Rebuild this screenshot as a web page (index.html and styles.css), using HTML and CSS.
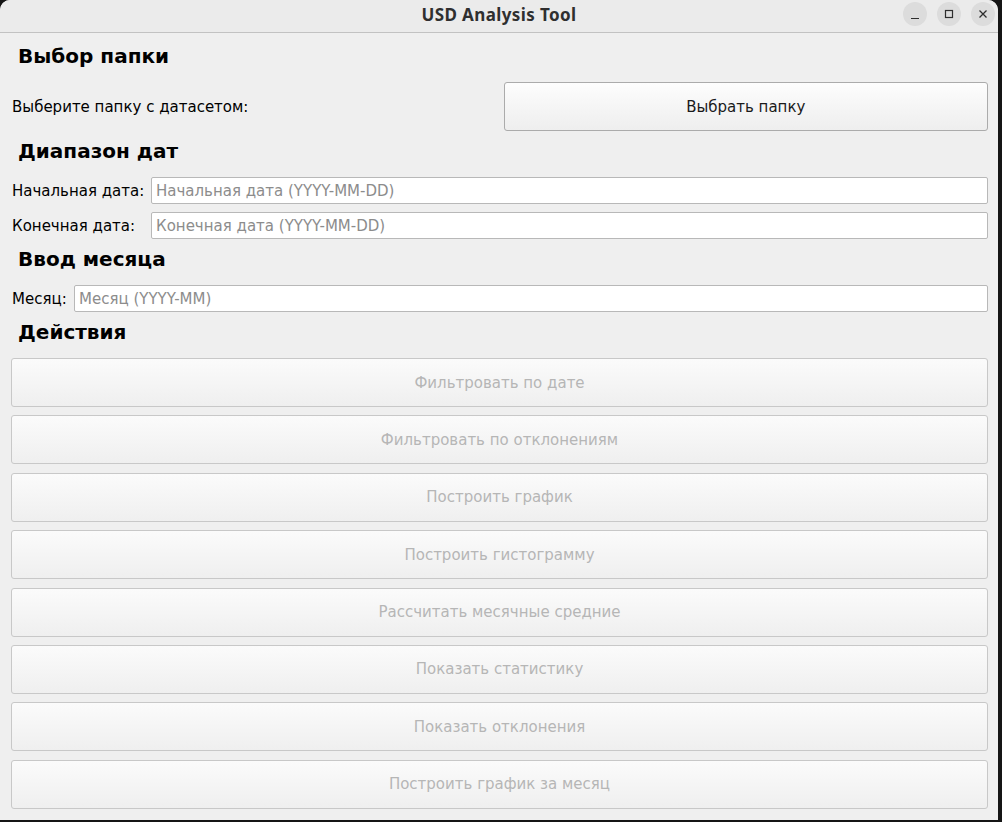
FILE: index.html
```html
<!DOCTYPE html>
<html lang="ru">
<head>
<meta charset="utf-8">
<title>USD Analysis Tool</title>
<link rel="stylesheet" href="styles.css">
</head>
<body>
<div class="window">
  <header class="titlebar">
    <div class="title">USD Analysis Tool</div>
    <div class="controls">
      <span class="ctl"><svg width="24" height="24" viewBox="0 0 24 24"><path d="M8 16.5h8" stroke="#2e2e2e" stroke-width="1.2" fill="none"/></svg></span>
      <span class="ctl"><svg width="24" height="24" viewBox="0 0 24 24"><rect x="8.5" y="8.5" width="7" height="7" stroke="#2e2e2e" stroke-width="1.2" fill="none"/></svg></span>
      <span class="ctl"><svg width="24" height="24" viewBox="0 0 24 24"><path d="M8.5 8.5l7 7M15.5 8.5l-7 7" stroke="#2e2e2e" stroke-width="1.3" fill="none"/></svg></span>
    </div>
  </header>
  <main class="content">
    <h2 class="heading">Выбор папки</h2>
    <div class="split-row">
      <span class="label">Выберите папку с датасетом:</span>
      <button class="btn">Выбрать папку</button>
    </div>

    <h2 class="heading">Диапазон дат</h2>
    <div class="form date-form">
      <label class="label">Начальная дата:</label>
      <input class="field" type="text" placeholder="Начальная дата (YYYY-MM-DD)">
      <label class="label">Конечная дата:</label>
      <input class="field" type="text" placeholder="Конечная дата (YYYY-MM-DD)">
    </div>

    <h2 class="heading">Ввод месяца</h2>
    <div class="form month-form">
      <label class="label">Месяц:</label>
      <input class="field" type="text" placeholder="Месяц (YYYY-MM)">
    </div>

    <h2 class="heading">Действия</h2>
    <div class="actions">
      <button class="btn" disabled>Фильтровать по дате</button>
      <button class="btn" disabled>Фильтровать по отклонениям</button>
      <button class="btn" disabled>Построить график</button>
      <button class="btn" disabled>Построить гистограмму</button>
      <button class="btn" disabled>Рассчитать месячные средние</button>
      <button class="btn" disabled>Показать статистику</button>
      <button class="btn" disabled>Показать отклонения</button>
      <button class="btn" disabled>Построить график за месяц</button>
    </div>
  </main>
</div>
</body>
</html>
```

FILE: styles.css
```css
* { box-sizing: border-box; }

html, body {
  margin: 0;
  padding: 0;
  width: 1002px;
  height: 822px;
  background: #151515;
  overflow: hidden;
}

.window {
  width: 998px;
  height: 820px;
  background: #efefef;
  border-radius: 10px 10px 0 0;
  overflow: hidden;
  display: flex;
  flex-direction: column;
  font-family: "DejaVu Sans", sans-serif;
  color: #000;
}

.titlebar {
  height: 33px;
  flex: none;
  background: #ebebeb;
  border-bottom: 1px solid #c2c2c2;
  display: flex;
  align-items: center;
  justify-content: center;
  position: relative;
}

.title {
  font-family: "Noto Sans", "Open Sans", sans-serif;
  font-weight: 700;
  font-size: 17px;
  letter-spacing: 0.4px;
  color: #2f2f2f;
  margin-top: -4px;
}

.controls {
  position: absolute;
  right: 3px;
  top: 2px;
  display: flex;
  gap: 10px;
}

.ctl {
  width: 24px;
  height: 24px;
  border-radius: 50%;
  background: #dcdcdc;
  display: flex;
  align-items: center;
  justify-content: center;
}

.ctl svg { display: block; }

.content {
  padding: 11px 10px 0 11px;
  display: flex;
  flex-direction: column;
  gap: 8px;
}

.heading {
  margin: 0;
  height: 30px;
  padding: 0 0 6px 7px;
  line-height: 24px;
  font-size: 20px;
  font-weight: 700;
}

.label {
  font-size: 15px;
  padding-left: 1px;
  white-space: nowrap;
}

.split-row {
  display: grid;
  grid-template-columns: 1fr 1fr;
  gap: 8px;
  align-items: center;
}

.btn {
  height: 49px;
  font-family: "DejaVu Sans", sans-serif;
  font-size: 15px;
  color: #1a1a1a;
  background: linear-gradient(#fdfdfd, #eeeeee);
  border: 1px solid #ababab;
  border-radius: 3px;
  padding: 0;
}

.btn:disabled {
  color: #b6b6b6;
  border-color: #c8c8c8;
  background: linear-gradient(#fbfbfb, #efefef);
}

.form {
  display: grid;
  align-items: center;
  row-gap: 8px;
  column-gap: 8px;
}

.date-form { grid-template-columns: 132px 1fr; }
.month-form { grid-template-columns: 55px 1fr; }

.field {
  height: 27px;
  font-family: "DejaVu Sans", sans-serif;
  font-size: 15px;
  padding: 0 4px;
  background: #fff;
  border: 1px solid #b8b8b8;
  border-radius: 2px;
  color: #000;
  outline: none;
}

.field::placeholder { color: #8c8c8c; }

.actions {
  display: flex;
  flex-direction: column;
  gap: 8.4px;
}
```
